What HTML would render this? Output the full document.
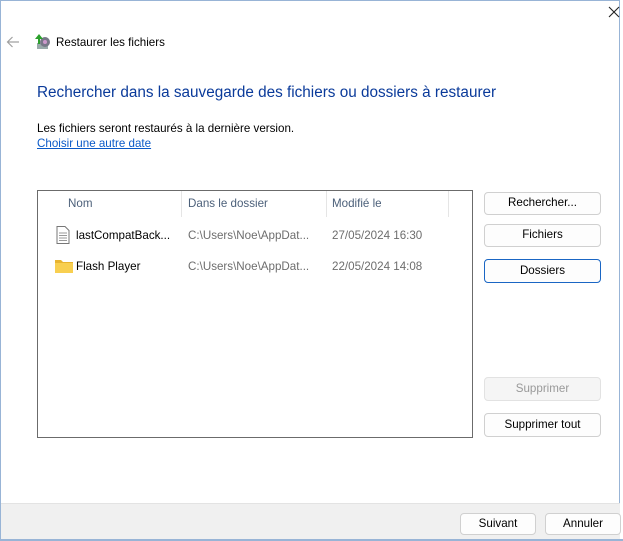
<!DOCTYPE html>
<html><head><meta charset="utf-8"><style>
*{box-sizing:border-box;margin:0;padding:0}
body{width:623px;height:541px;position:relative;background:#fff;font-family:"Liberation Sans",sans-serif;font-size:11.6px;color:#000;overflow:hidden}
.a{position:absolute;white-space:nowrap}
.btn{position:absolute;border:1px solid #d0d0d0;border-radius:4px;background:#fdfdfd;text-align:center;font-size:11.6px;line-height:20px}
.g{color:#6d6d6d}
</style></head><body>
<div class="a" style="left:0;top:0;width:620px;height:541px;border:1px solid #98b4d6;border-bottom:none"></div>
<div class="a" style="left:0;top:539px;width:623px;height:2px;background:#98b4d6"></div>
<svg class="a" style="left:608px;top:6px" width="12" height="12" viewBox="0 0 12 12"><path d="M1 1L11 11M11 1L1 11" stroke="#222" stroke-width="1.1"/></svg>
<svg class="a" style="left:6px;top:36px" width="14" height="12" viewBox="0 0 14 12"><path d="M13 6H1.5M6.5 1L1.5 6L6.5 11" stroke="#a0a0a0" stroke-width="1.2" fill="none"/></svg>
<svg class="a" style="left:34px;top:32px" width="18" height="18" viewBox="0 0 18 18"><rect x="3" y="11" width="11" height="6" fill="#9aa" /><circle cx="11" cy="10" r="5" fill="#778" /><circle cx="11" cy="10" r="2" fill="#c9c" /><path d="M5 2 L1 7 H4 V12 H6 V7 H9 Z" fill="#2ca02c"/></svg>
<div class="a" style="left:56px;top:36px">Restaurer les fichiers</div>
<div class="a" style="left:37px;top:84px;font-size:15.3px;color:#0a3a9a">Rechercher dans la sauvegarde des fichiers ou dossiers à restaurer</div>
<div class="a" style="left:37px;top:122px">Les fichiers seront restaurés à la dernière version.</div>
<div class="a" style="left:37px;top:137px;color:#0a5ac8;text-decoration:underline">Choisir une autre date</div>
<div class="a" style="left:37px;top:190px;width:436px;height:248px;border:1px solid #6b6b6b"></div>
<div class="a" style="left:181px;top:191px;width:1px;height:26px;background:#e5e5e5"></div>
<div class="a" style="left:326px;top:191px;width:1px;height:26px;background:#e5e5e5"></div>
<div class="a" style="left:448px;top:191px;width:1px;height:26px;background:#e5e5e5"></div>
<div class="a" style="left:68px;top:197px;color:#4c607a">Nom</div>
<div class="a" style="left:188px;top:197px;color:#4c607a">Dans le dossier</div>
<div class="a" style="left:332px;top:197px;color:#4c607a">Modifié le</div>
<svg class="a" style="left:56px;top:226px" width="14" height="18" viewBox="0 0 14 18"><path d="M1 .5 H9 L13 4.5 V17.5 H1 Z" fill="#fff" stroke="#777"/><path d="M3 7H11M3 9.5H11M3 12H11M3 14.5H11" stroke="#999"/></svg>
<div class="a" style="left:76px;top:229px">lastCompatBack...</div>
<div class="a g" style="left:188px;top:229px">C:\Users\Noe\AppDat...</div>
<div class="a g" style="left:332px;top:229px">27/05/2024 16:30</div>
<svg class="a" style="left:55px;top:259px" width="18" height="14" viewBox="0 0 18 14"><path d="M0 1 H6 L8 3 H18 V14 H0 Z" fill="#e8b430"/><rect x="0" y="4" width="18" height="10" fill="#f8cf50"/></svg>
<div class="a" style="left:76px;top:260px">Flash Player</div>
<div class="a g" style="left:188px;top:260px">C:\Users\Noe\AppDat...</div>
<div class="a g" style="left:332px;top:260px">22/05/2024 14:08</div>
<div class="btn" style="left:484px;top:192px;width:117px;height:23px">Rechercher...</div>
<div class="btn" style="left:484px;top:224px;width:117px;height:23px">Fichiers</div>
<div class="btn" style="left:484px;top:259px;width:117px;height:24px;border-color:#1a66c4;line-height:22px">Dossiers</div>
<div class="btn" style="left:484px;top:377px;width:117px;height:24px;color:#999;background:#f5f5f5;border-color:#e2e2e2;line-height:22px">Supprimer</div>
<div class="btn" style="left:484px;top:413px;width:117px;height:24px;line-height:22px">Supprimer tout</div>
<div class="a" style="left:1px;top:503px;width:619px;height:36px;background:#f0f0f0;border-top:1px solid #e3e3e3"></div>
<div class="btn" style="left:460px;top:513px;width:76px;height:22px">Suivant</div>
<div class="btn" style="left:545px;top:513px;width:76px;height:22px">Annuler</div>
</body></html>
